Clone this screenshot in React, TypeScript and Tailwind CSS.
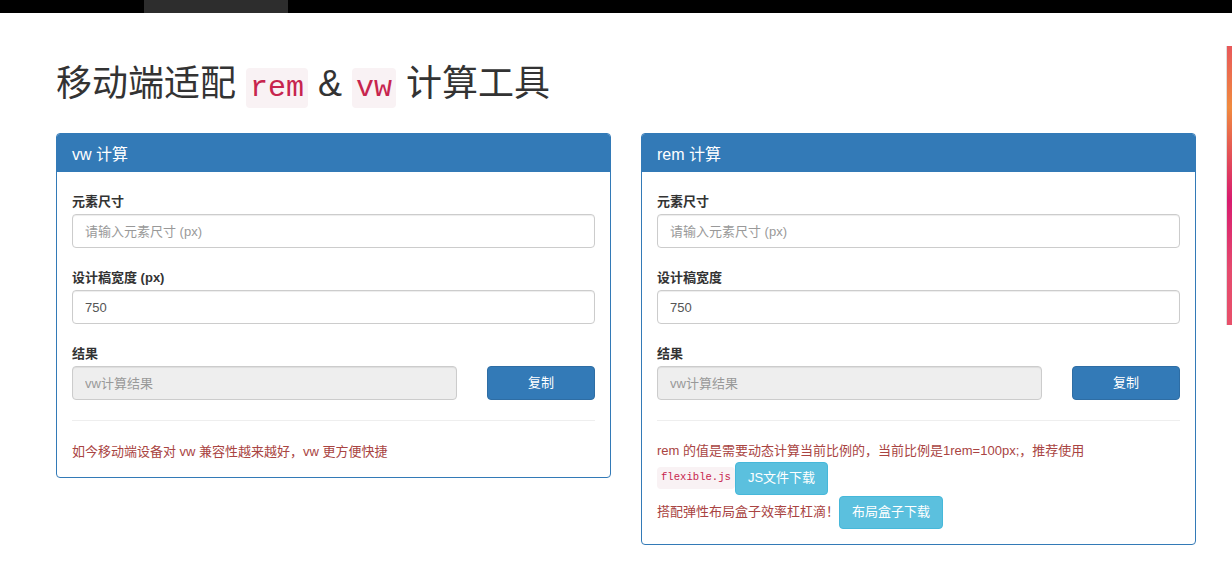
const font = "font-['Liberation_Sans','Noto_Sans_CJK_SC',sans-serif]";
const mono = "font-['Liberation_Mono',monospace]";

const Field = ({ label, value, placeholder }: { label: string; value?: string; placeholder?: string }) => (
  <div className="flex flex-col">
    <label className="h-[20px] leading-[20px] text-[13px] font-bold text-[#333]">{label}</label>
    <input
      readOnly
      defaultValue={value}
      placeholder={placeholder}
      className="mt-[2px] h-[34px] px-[12px] text-[13px] text-[#555] placeholder:text-[#999] border border-[#ccc] rounded-[4px] shadow-[inset_0_1px_1px_rgba(0,0,0,0.075)] outline-none"
    />
  </div>
);

const Panel = ({
  title,
  resultPlaceholder,
  widthLabel,
  children,
}: {
  title: string;
  resultPlaceholder: string;
  widthLabel: string;
  children: React.ReactNode;
}) => (
  <div className="w-[555px] border border-[#337ab7] rounded-[4px] bg-white">
    <div className="h-[38px] pt-[4px] px-[15px] flex items-center bg-[#337ab7] text-white text-[16px] border-b border-[#337ab7] rounded-t-[3px]">
      {title}
    </div>
    <div className="px-[15px] pt-[20px] pb-[15px]">
      <Field label="元素尺寸" placeholder="请输入元素尺寸 (px)" />
      <div className="mt-[20px]">
        <Field label={widthLabel} value="750" />
      </div>
      <div className="mt-[20px] flex flex-col">
        <label className="h-[20px] leading-[20px] text-[13px] font-bold text-[#333]">结果</label>
        <div className="mt-[2px] flex">
          <input
            disabled
            placeholder={resultPlaceholder}
            className="flex-1 h-[34px] px-[12px] text-[13px] bg-[#eee] placeholder:text-[#999] border border-[#ccc] rounded-[4px] shadow-[inset_0_1px_1px_rgba(0,0,0,0.075)]"
          />
          <button className="ml-[30px] w-[108px] h-[34px] bg-[#337ab7] border border-[#2e6da4] rounded-[4px] text-white text-[13px]">
            复制
          </button>
        </div>
      </div>
      <hr className="mt-[20px] border-0 border-t border-[#eee]" />
      <div className="mt-[20px] text-[13px] text-[#a94442]">{children}</div>
    </div>
  </div>
);

const InfoButton = ({ children }: { children: React.ReactNode }) => (
  <button className="h-[33px] px-[12px] bg-[#5bc0de] border border-[#46b8da] rounded-[4px] text-white text-[13px]">
    {children}
  </button>
);

const codeTitle = `${mono} text-[30px] leading-[35px] px-[4px] py-[3px] bg-[#f9f2f4] text-[#c7254e] rounded-[4px]`;

export default function App() {
  return (
    <div className={`${font} relative min-h-[569px] bg-white text-[#333]`}>
      <div className="h-[13px] bg-black flex">
        <div className="ml-[144px] w-[144px] h-full bg-[#2d2d2d]" />
      </div>

      <div className="pl-[56px]">
        <h1 className="mt-[51px] h-[40px] leading-[40px] text-[36px] font-normal text-[#333]">
          移动端适配 <code className={codeTitle}>rem</code> &amp; <code className={codeTitle}>vw</code> 计算工具
        </h1>

        <div className="mt-[29px] flex items-start gap-[30px]">
          <Panel title="vw 计算" widthLabel="设计稿宽度 (px)" resultPlaceholder="vw计算结果">
            <div className="h-[21px] pt-[1px] leading-[20px]">如今移动端设备对 vw 兼容性越来越好，vw 更方便快捷</div>
          </Panel>
          <Panel title="rem 计算" widthLabel="设计稿宽度" resultPlaceholder="vw计算结果">
            <div className="h-[20px] leading-[20px]">rem 的值是需要动态计算当前比例的，当前比例是1rem=100px;，推荐使用</div>
            <div className="h-[34px] flex items-center">
              <code className={`${mono} text-[10.6px] px-[4px] py-[3px] bg-[#f9f2f4] text-[#c7254e] rounded-[4px]`}>flexible.js</code>
              <InfoButton>JS文件下载</InfoButton>
            </div>
            <div className="h-[34px] flex items-center">
              <span>搭配弹性布局盒子效率杠杠滴！</span>
              <InfoButton>布局盒子下载</InfoButton>
            </div>
          </Panel>
        </div>
      </div>

      <div className="absolute right-0 top-[46px] w-[6px] h-[279px] border-l border-[#ddd] bg-[linear-gradient(180deg,#e8585a_0%,#f08a3e_22%,#d81b6f_55%,#e54a6e_80%,#e8506a_100%)]" />
    </div>
  );
}
